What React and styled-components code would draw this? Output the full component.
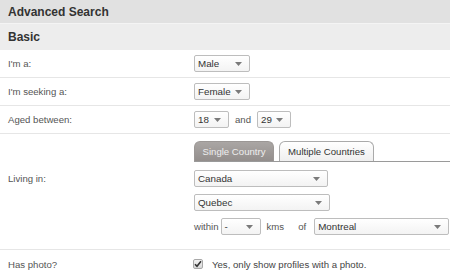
import React from 'react';
import styled, { createGlobalStyle } from 'styled-components';

const GlobalStyle = createGlobalStyle`
    html, body {
        margin: 0;
        padding: 0;
        background: #fff;
    }
    body {
        font-family: 'Liberation Sans', Arial, sans-serif;
    }
`;

const Arrow = () => (
    <svg width="7" height="4" viewBox="0 0 7 4">
        <path d="M0 0 L7 0 L3.5 4 Z" fill="#7a7a7a" />
    </svg>
);

const Select = ({ value, width }) => (
    <SelectBox $width={width}>
        <span>{value}</span>
        <Arrow />
    </SelectBox>
);

const App = () => {
    return (
        <Page>
            <GlobalStyle />
            <Title>Advanced Search</Title>
            <Section>Basic</Section>

            <Row>
                <Label>I'm a:</Label>
                <Field>
                    <Select value="Male" width={56} />
                </Field>
            </Row>

            <Row>
                <Label>I'm seeking a:</Label>
                <Field>
                    <Select value="Female" width={56} />
                </Field>
            </Row>

            <Row>
                <Label>Aged between:</Label>
                <Field>
                    <Select value="18" width={35} />
                    <Word $gap={6}>and</Word>
                    <Select value="29" width={34} />
                </Field>
            </Row>

            <TallRow>
                <Label $offset={20}>Living in:</Label>
                <Stack>
                    <Tabs>
                        <Tab $active $width={80}>Single Country</Tab>
                        <Tab $width={95}>Multiple Countries</Tab>
                    </Tabs>
                    <Select value="Canada" width={134} />
                    <Select value="Quebec" width={136} />
                    <Field>
                        <Word $gap={0}>within</Word>
                        <Select value="-" width={40} />
                        <Word $gap={6}>kms</Word>
                        <Word $gap={8}>of</Word>
                        <Select value="Montreal" width={135} />
                    </Field>
                </Stack>
            </TallRow>

            <Row $last>
                <Label>Has photo?</Label>
                <Field>
                    <CheckBox>
                        <svg width="8" height="8" viewBox="0 0 8 8">
                            <path d="M1 4.2 L3 6.3 L7 1.3" fill="none" stroke="#333" strokeWidth="1.6" />
                        </svg>
                    </CheckBox>
                    <CheckText>Yes, only show profiles with a photo.</CheckText>
                </Field>
            </Row>
        </Page>
    );
}

const Page = styled.div`
    width: 450px;
    height: 277px;
    overflow: hidden;
    background: #fff;
`;

const Title = styled.div`
    height: 23px;
    display: flex;
    align-items: center;
    padding-left: 8px;
    background: #e1e1e1;
    color: #333;
    font-size: 12px;
    font-weight: bold;
`;

const Section = styled.div`
    height: 27px;
    display: flex;
    align-items: center;
    padding-left: 8px;
    background: #ededed;
    border-top: 1px solid #f4f4f4;
    box-sizing: border-box;
    color: #333;
    font-size: 12px;
    font-weight: bold;
`;

const Row = styled.div`
    display: grid;
    grid-template-columns: 194px 1fr;
    align-items: center;
    height: 28px;
    box-sizing: border-box;
    border-bottom: ${props => props.$last ? 'none' : '1px solid #e6e6e6'};
`;

const TallRow = styled.div`
    display: grid;
    grid-template-columns: 194px 1fr;
    align-items: center;
    border-bottom: 1px solid #e6e6e6;
    padding: 7px 0 14px;
`;

const Label = styled.div`
    padding-left: 8px;
    padding-bottom: ${props => props.$offset || 0}px;
    color: #555;
    font-size: 9.6px;
`;

const Field = styled.div`
    display: flex;
    align-items: center;
`;

const Stack = styled.div`
    display: flex;
    flex-direction: column;
    align-items: flex-start;
    gap: 7px;
`;

const SelectBox = styled.div`
    width: ${props => props.$width}px;
    height: 17px;
    box-sizing: border-box;
    display: flex;
    align-items: center;
    justify-content: space-between;
    padding: 0 7px 0 3px;
    border: 1px solid #bdbdbd;
    border-radius: 2px;
    background: linear-gradient(#ffffff, #f3f3f3);
    color: #333;
    font-size: 9.8px;
`;

const Word = styled.span`
    margin: 0 ${props => props.$gap}px;
    padding-right: ${props => props.$gap === 0 ? 2 : 0}px;
    color: #555;
    font-size: 9.6px;
`;

const Tabs = styled.div`
    align-self: stretch;
    display: flex;
    gap: 5px;
    border-bottom: 1px solid #9a9a9a;
    margin-bottom: 1px;
`;

const Tab = styled.div`
    width: ${props => props.$width}px;
    height: 20px;
    box-sizing: border-box;
    display: flex;
    align-items: center;
    justify-content: center;
    border: 1px solid ${props => props.$active ? '#9b9795' : '#aaa'};
    border-bottom: none;
    border-radius: 6px 6px 0 0;
    background: ${props => props.$active
        ? 'linear-gradient(#aaa6a4, #938e8c)'
        : 'linear-gradient(#ffffff, #efefef)'};
    color: ${props => props.$active ? '#eeeeee' : '#333'};
    font-size: 9.6px;
    white-space: nowrap;
`;

const CheckBox = styled.span`
    width: 10px;
    height: 10px;
    box-sizing: border-box;
    margin-left: -1px;
    display: flex;
    align-items: center;
    justify-content: center;
    border: 1px solid #a8a8a8;
    border-radius: 2px;
    background: linear-gradient(#f2f2f2, #d8d8d8);
`;

const CheckText = styled.span`
    margin-left: 9px;
    color: #444;
    font-size: 9.6px;
`;

export default App;
